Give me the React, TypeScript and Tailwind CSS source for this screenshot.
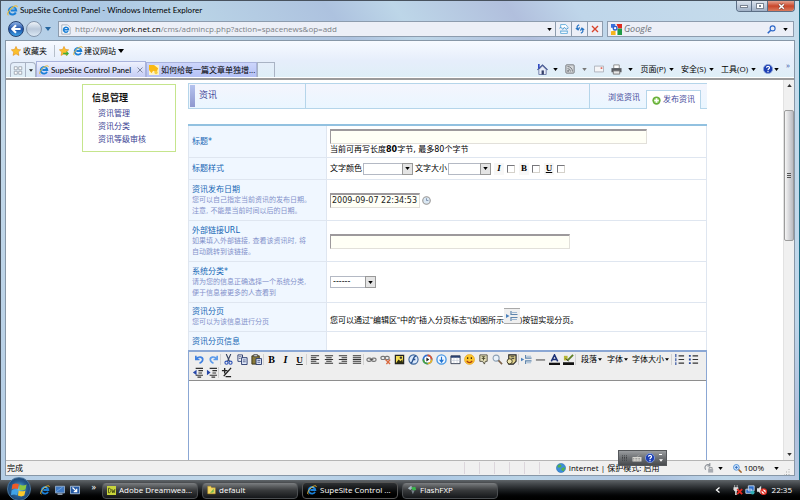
import { ReactNode } from 'react';

const uiFont = 'font-[Open_Sans,Noto_Sans_CJK_SC,sans-serif]';
const pageFont = 'font-[DejaVu_Sans,Noto_Sans_CJK_SC,sans-serif]';

interface GlyphProps {
  children: ReactNode;
  className?: string;
}

function Glyph({ children, className = 'w-3 h-3' }: GlyphProps) {
  return (
    <svg viewBox="0 0 12 12" className={`shrink-0 ${className}`} fill="none" aria-hidden="true">
      {children}
    </svg>
  );
}

function Caret({ className = 'text-black', size = 'w-[6px] h-1' }: { className?: string; size?: string }) {
  return (
    <svg viewBox="0 0 6 4" className={`shrink-0 ${size} ${className}`} aria-hidden="true">
      <path d="M0 0h6L3 4z" fill="currentColor" />
    </svg>
  );
}

function IeIcon({ className = 'w-[11px] h-[11px]' }: { className?: string }) {
  return (
    <Glyph className={className}>
      <path d="M9.6 8.2A4 4 0 1 1 10 6H4" stroke="#1b7fd6" strokeWidth="2.2" />
      <path d="M3.2 4.4A3.4 3.4 0 0 1 8.4 3.6" stroke="#6cc4f5" strokeWidth="1" />
      <path d="M1.6 11.2C-.6 10.2 2 5.6 5.6 2.8 8.6.5 11.6.2 11 2.4" stroke="#f0b92c" strokeWidth="1.1" />
    </Glyph>
  );
}

function Star({ add = false }: { add?: boolean }) {
  return (
    <Glyph className="w-[10px] h-[10px]">
      <path d="M6 .5l1.7 3.6 3.9.5-2.9 2.7.8 4L6 9.4l-3.5 1.9.8-4L.4 4.6l3.9-.5z" fill="#fbc02d" stroke="#e38a10" strokeWidth=".7" />
      {add && <path d="M5 8h4V6l3 3-3 3v-2H5z" fill="#3fae35" />}
    </Glyph>
  );
}

function TitleBar() {
  return (
    <header className="flex items-start h-[19px] pl-[6px] pr-1">
      <div className="flex items-center gap-[2px] h-[18px] flex-1">
        <IeIcon />
        <h1 className="text-[8px] leading-none text-black font-[Lato,sans-serif]">SupeSite Control Panel - Windows Internet Explorer</h1>
      </div>
      <div className="flex h-[11px] rounded-b border border-t-0 border-[#5c6f86] overflow-hidden">
        <button aria-label="Minimize" className="w-[15px] flex items-center justify-center bg-linear-to-b from-[#dbe3ed] to-[#9fb0c6] border-r border-[#5c6f86]">
          <span className="w-2 h-[3px] bg-white border border-[#7b8593]" />
        </button>
        <button aria-label="Maximize" className="w-4 flex items-center justify-center bg-linear-to-b from-[#dbe3ed] to-[#9fb0c6] border-r border-[#5c6f86]">
          <span className="w-2 h-[6px] bg-white border border-[#7b8593] flex items-center justify-center">
            <span className="w-[2px] h-[2px] bg-[#7b8593]" />
          </span>
        </button>
        <button aria-label="Close" className="w-[26px] flex items-center justify-center bg-linear-to-b from-[#e3a18f] via-[#c9462a] to-[#d9795c]">
          <Glyph className="w-[7px] h-[7px]">
            <path d="M2 2l8 8M10 2l-8 8" stroke="#6d3b33" strokeWidth="4.5" />
            <path d="M2 2l8 8M10 2l-8 8" stroke="#fff" strokeWidth="2.6" />
          </Glyph>
        </button>
      </div>
    </header>
  );
}

function AddressRow() {
  return (
    <div className="flex items-center h-[18px] pl-[7px] pr-[5px] mb-[2px]">
      <button aria-label="Back" className="w-4 h-4 rounded-full border border-[#24406f] bg-linear-to-b from-[#8fb3e6] via-[#1d4fa5] to-[#3fa4e8] flex items-center justify-center">
        <Glyph className="w-[10px] h-[10px]">
          <path d="M6 1.5L1.5 6 6 10.5M2 6h9.5" stroke="#fff" strokeWidth="2.6" />
        </Glyph>
      </button>
      <button aria-label="Forward" className="w-4 h-4 ml-[2px] rounded-full border border-[#8495ab] bg-linear-to-b from-[#eef3f9] via-[#b9c8da] to-[#dbe8f4]" />
      <button aria-label="Recent pages" className="ml-[3px] mr-[7px]">
        <Caret className="text-[#25659e]" />
      </button>
      <form className="flex flex-1 h-4 border border-[#8d9cae] bg-[#eceff7]">
        <label htmlFor="url" className="flex items-center pl-[2px] pr-1">
          <Glyph className="w-[10px] h-[11px]">
            <path d="M1 .5h7l3 3v8H1z" fill="#fff" stroke="#9aa5b3" />
            <path d="M8.5 8A3 3 0 1 1 9 6.2H4" stroke="#1b7fd6" strokeWidth="1.8" />
          </Glyph>
        </label>
        <div className="relative flex flex-1 items-center">
          <input id="url" aria-label="Address" className="w-full bg-transparent text-transparent text-[8px] outline-none" />
          <span className="absolute left-0 whitespace-nowrap text-[8px] leading-none text-[#7b7f86] font-[Open_Sans,sans-serif]">
            http://www.<b className="font-normal text-black">york.net.cn</b>/cms/admincp.php?action=spacenews&amp;op=add
          </span>
        </div>
        <button type="button" aria-label="Show addresses" className="w-[10px] flex items-center justify-center mr-[1px]"><Caret size="w-[5px] h-[3px]" /></button>
        <button type="button" aria-label="Compatibility view" className="w-4 flex items-center justify-center border-l border-[#8d9cae]">
          <Glyph className="w-[10px] h-[10px]">
            <path d="M2 4V.7h6l2 2V4M2 8v3.3h8V8" fill="#fff" stroke="#55a5d8" />
            <path d="M.5 5l2-1 2 2.5 2-2.5 2 2.5 3-2M2 8.5h8" stroke="#3a94d0" />
          </Glyph>
        </button>
        <button type="button" aria-label="Refresh" className="w-4 flex items-center justify-center border-l border-[#8d9cae]">
          <Glyph className="w-[10px] h-[10px]">
            <path d="M5 1C2 2 2 4 3.5 6.5M1 5l2.7 2L5.5 4M7 11c3-1 3-3 1.5-5.5M11 7L8.3 5 6.5 8" stroke="#2b76c4" strokeWidth="1.5" />
          </Glyph>
        </button>
        <button type="button" aria-label="Stop" className="w-[15px] flex items-center justify-center border-l border-[#8d9cae]">
          <Glyph className="w-2 h-2">
            <path d="M1.5 1.5l9 9M10.5 1.5l-9 9" stroke="#d8432b" strokeWidth="2" />
          </Glyph>
        </button>
      </form>
      <form className="flex items-center h-4 w-[187px] ml-1 px-[3px] border border-[#8d9cae] bg-[#eceff7]">
        <Glyph className="w-[11px] h-[11px]">
          <path d="M0 0h12v12H0z" fill="#fff" />
          <path d="M0 0h5L3 4H0z" fill="#3a6fdc" />
          <path d="M6 0h6v5H8z" fill="#de2b20" />
          <path d="M7 5h5v7H7z" fill="#1f9b47" />
          <path d="M0 8l5-1v5H0z" fill="#f6b51c" />
          <circle cx="4.5" cy="4.5" r="2" stroke="#2e62cf" strokeWidth="1.5" />
        </Glyph>
        <input aria-label="Search" placeholder="Google" className="flex-1 min-w-0 ml-[2px] bg-transparent text-[9px] italic placeholder:text-[#6d7178] outline-none font-[Open_Sans,sans-serif]" />
        <button type="button" aria-label="Search" className="mr-[7px]">
          <Glyph className="w-[9px] h-[9px]">
            <circle cx="7.5" cy="4.5" r="3.3" stroke="#2c66c8" strokeWidth="1.5" />
            <path d="M5 7l-4 4" stroke="#2c66c8" strokeWidth="2.2" />
          </Glyph>
        </button>
        <button type="button" aria-label="Search options" className="mr-[2px]"><Caret size="w-[5px] h-[3px]" /></button>
      </form>
    </div>
  );
}

function FavoritesBar() {
  return (
    <div className="flex items-center h-[19px] pl-[5px] text-[8px] leading-none text-black">
      <button className="flex items-center gap-[2px] pr-[7px] h-3 border-r border-[#b6bfca]"><Star />收藏夹</button>
      <button aria-label="Add to favorites" className="ml-[4px]"><Star add /></button>
      <button className="flex items-center gap-[1px] ml-[4px]">
        <IeIcon className="w-[10px] h-[10px]" />建议网站<Caret className="ml-[1px]" />
      </button>
    </div>
  );
}

function CommandBar() {
  return (
    <div className="flex items-center gap-[7px] h-4 text-[8px] leading-none text-black">
      <button aria-label="Home" className="flex items-center gap-[5px]">
        <Glyph className="w-[11px] h-[11px]">
          <path d="M2 6v5.5h8V6L6 2z" fill="#e8edf8" stroke="#6c7ba6" />
          <path d="M.5 6.5L6 1l5.5 5.5" stroke="#3d4f8c" strokeWidth="1.2" />
          <path d="M2 0v5" stroke="#2f49c4" strokeWidth="1.8" />
          <path d="M5 7h2.5v4.5H5z" fill="#34406a" />
        </Glyph>
        <Caret size="w-[5px] h-[3px]" />
      </button>
      <button aria-label="Feeds" className="flex items-center gap-[7px]">
        <Glyph className="w-[10px] h-[10px]">
          <rect x="1" y="1" width="10" height="10" rx="1" fill="#d5d8db" stroke="#676b70" />
          <path d="M3 5.5A3.5 3.5 0 0 1 6.5 9M3 3a6 6 0 0 1 6 6" stroke="#676b70" />
          <circle cx="3.7" cy="8.3" r="1" fill="#676b70" />
        </Glyph>
        <Caret className="text-[#777]" size="w-[5px] h-[3px]" />
      </button>
      <button aria-label="Read mail">
        <Glyph className="w-[10px] h-[10px]">
          <path d="M.5 2.5h11v7H.5z" fill="#f5f5f7" stroke="#a5a9b3" />
          <path d="M8 4h2v1.8H8z" fill="#dd5144" />
        </Glyph>
      </button>
      <button aria-label="Print" className="flex items-center gap-[6px]">
        <Glyph className="w-[11px] h-[11px]">
          <path d="M3 1h6v4H3z" fill="#fff" stroke="#8a8a8a" />
          <path d="M.5 4.5h11V9H.5z" fill="#5a5d63" />
          <path d="M2.500 7.500h7V11h-7z" fill="#e9e9e9" stroke="#777" />
        </Glyph>
        <Caret size="w-[5px] h-[3px]" />
      </button>
      <button className="flex items-center gap-[3px]">页面(P)<Caret size="w-[5px] h-[3px]" /></button>
      <button className="flex items-center gap-[3px]">安全(S)<Caret size="w-[5px] h-[3px]" /></button>
      <button className="flex items-center gap-[3px]">工具(O)<Caret size="w-[5px] h-[3px]" /></button>
      <button aria-label="Help" className="flex items-center gap-[1px]"><HelpIcon /><Caret size="w-[5px] h-[3px]" /></button>
      <span className="self-start text-[#3657a8] pr-1">»</span>
    </div>
  );
}

function HelpIcon() {
  return (
    <Glyph className="w-[10px] h-[10px]">
      <circle cx="6" cy="6" r="5.500" fill="#1c3fb4" stroke="#8da3d8" />
      <path d="M4.200 4.600C4.300 2.300 8 2.400 7.800 4.600 7.700 5.800 6 5.800 6 7.400M6 8.400V10" stroke="#fff" strokeWidth="1.400" />
    </Glyph>
  );
}

function TabRow() {
  return (
    <div className="flex items-end h-[17px] pl-1">
      <div className="flex h-[15px] border border-b-0 border-[#a9b3c4] rounded-t-sm">
        <button aria-label="Quick tabs" className="w-[15px] flex items-center justify-center border-r border-[#a9b3c4]">
          <Glyph className="w-[10px] h-[9px]">
            <path d="M1 1h4v4H1zM7 1h4v4H7zM1 7h4v4H1zM7 7h4v4H7z" stroke="#8d95a3" fill="#fff" />
          </Glyph>
        </button>
        <button aria-label="Tab list" className="w-[9px] flex items-center justify-center"><Caret className="text-[#222]" size="w-1 h-[3px]" /></button>
      </div>
      <div className="flex items-center h-4 w-[110px] px-[2px] gap-[2px] border border-b-0 border-[#a9b3dc] bg-linear-to-b from-[#eef1fd] to-[#c5cdf5] text-[8px] leading-none whitespace-nowrap">
        <IeIcon className="w-[10px] h-[10px]" />
        <a href="#" className="flex-1 font-[Lato,sans-serif]">SupeSite Control Panel</a>
        <button aria-label="Close tab">
          <Glyph className="w-[6px] h-[6px]"><path d="M1 1l10 10M11 1L1 11" stroke="#8088a0" strokeWidth="2" /></Glyph>
        </button>
      </div>
      <a href="#" className="flex items-center h-[15px] w-[111px] px-[2px] gap-[2px] border border-b-0 border-[#a9b3dc] bg-linear-to-b from-[#cdd6fb] to-[#b4c1f5] text-[8px] leading-none whitespace-nowrap">
        <Glyph className="w-[10px] h-[10px]">
          <path d="M0 0h12v12H0z" fill="#fdf3c8" />
          <path d="M0 0h6l5 4-2 5-4-2-2 3-3-4z" fill="#f9b915" />
          <circle cx="8.500" cy="9" r="2" fill="#f6cf45" />
        </Glyph>
        如何给每一篇文章单独增...
      </a>
      <button aria-label="New tab" className="w-[18px] h-[15px] border border-b-0 border-[#a9b3c4]" />
      <div className="flex-1" />
      <CommandBar />
    </div>
  );
}

function Sidebar() {
  return (
    <nav className="w-[94px] shrink-0 self-start mt-1 pt-[7px] pb-[5px] pl-[9px] border border-[#c5e58c]">
      <h2 className="text-[9px] leading-[13px] font-bold text-[#111]">信息管理</h2>
      <ul className="pl-[6px] mt-[2px] text-[8px] leading-[13px] text-[#3b3f94]">
        <li><a href="#">资讯管理</a></li>
        <li><a href="#">资讯分类</a></li>
        <li><a href="#">资讯等级审核</a></li>
      </ul>
    </nav>
  );
}

function PageTabs() {
  return (
    <div className="flex h-[26px] border border-r-0 border-[#b5d5ea] bg-linear-to-b from-[#f4f5fd] to-[#eaf6ff] text-[#45489a]">
      <div className="w-[5px] m-[1px] bg-linear-to-b from-[#b4c2ee] to-[#8f98cf]" />
      <h2 className="w-[110px] pl-[3px] text-[9px] leading-[22px] border-r border-[#b5d5ea]">资讯</h2>
      <div className="flex flex-1 items-end justify-end text-[8px]">
        <a href="#" className="h-full flex items-center pt-1 pl-[18px] pr-[6px] border-l border-[#b5d5ea]">浏览资讯</a>
        <a href="#" className="flex items-center gap-[2px] h-[19px] -mb-px mr-[6px] px-[5px] bg-white border border-b-0 border-[#b5d5ea]">
          <Glyph className="w-[9px] h-[9px]">
            <circle cx="6" cy="6" r="5.500" fill="#68b03a" />
            <circle cx="6" cy="6" r="3.400" fill="#9ed674" />
            <path d="M6 3v6M3 6h6" stroke="#fff" strokeWidth="2" />
          </Glyph>
          发布资讯
        </a>
      </div>
    </div>
  );
}

interface FieldRowProps {
  id: string;
  label: string;
  required?: boolean;
  hint?: string[];
  className: string;
  children?: ReactNode;
}

function FieldRow({ id, label, required, hint = [], className, children }: FieldRowProps) {
  return (
    <div className={`flex border-b border-[#dfe6f0] ${className}`}>
      <div className="w-[138px] shrink-0 pl-[3px] flex flex-col justify-center bg-[#f0f7ff] border-r border-[#dfe6f0] whitespace-nowrap">
        <label htmlFor={id} className="text-[8px] leading-[11px] text-[#1566b4]">
          {label}{required && '*'}
        </label>
        {hint.map(line => (
          <p key={line} className="text-[7px] leading-[11px] text-[#8492cb]">{line}</p>
        ))}
      </div>
      <div className="flex-1 pl-[3px] flex flex-col justify-center items-start text-[8px] leading-[11px] text-black whitespace-nowrap">
        {children}
      </div>
    </div>
  );
}

const inputLook = 'h-[15px] px-[1px] bg-[#fffff6] border border-[#e2e0da] border-t-2 border-t-[#9d999c] border-l-[#9d999c] outline-none';

interface PickProps {
  id: string;
  label: string;
  text?: string;
  className: string;
}

function Pick({ id, label, text = '', className }: PickProps) {
  return (
    <span className={`relative inline-flex h-3 ${className}`}>
      <select id={id} aria-label={label} className="w-full h-3 pl-[2px] appearance-none bg-white border border-[#b4b9c4] text-[8px] leading-none outline-none">
        <option>{text}</option>
      </select>
      <span className="absolute right-0 top-0 w-[11px] h-3 flex items-center justify-center bg-[#e4e4e4] border border-[#999] pointer-events-none">
        <Caret size="w-[5px] h-[3px]" />
      </span>
    </span>
  );
}

function StyleCheck({ letter, label, className }: { letter: string; label: string; className: string }) {
  return (
    <label className="flex items-center gap-[3px]">
      <span className={`w-[10px] h-3 text-center text-[9px] leading-[10px] font-bold bg-[#f7f7f7] font-[Liberation_Serif,serif] ${className}`}>{letter}</span>
      <input type="checkbox" aria-label={label} className="appearance-none w-2 h-2 bg-white border border-[#d5d2cb] border-t-[#77777c] border-l-[#77777c]" />
    </label>
  );
}

const lines = (d: string) => <path d={d} stroke="#333" strokeWidth="1.100" />;

function PageBreakGlyph() {
  return (
    <>
      <path d="M5 1v3.500h6.500M5 11V7.500h6.500" stroke="#5e85ad" strokeWidth="1.200" />
      <path d="M6 2.500h5M6 9.500h5" stroke="#9fb9d3" strokeWidth="1.200" />
      <path d="M0 4l3.500 2L0 8z" fill="#4a80bd" />
    </>
  );
}

const toolGroups: { name: string; art: ReactNode }[][] = [
  [
    { name: 'Undo', art: <path d="M2 2v4h4M2.500 5.500C5 2 10 3 9.500 6.500 9.200 8.500 7.500 9.500 6 10" stroke="#3d7fe0" strokeWidth="1.800" /> },
    { name: 'Redo', art: <path d="M10 2v4H6M9.500 5.500C7 2 2 3 2.500 6.500 2.800 8.500 4.500 9.500 6 10" stroke="#5b9aea" strokeWidth="1.800" /> },
  ],
  [
    { name: 'Cut', art: <><path d="M3.500 0L7 8M8.500 0L5 8" stroke="#34405c" strokeWidth="1.200" /><circle cx="3.800" cy="9.500" r="1.700" stroke="#2d52b6" strokeWidth="1.200" /><circle cx="8.200" cy="9.500" r="1.700" stroke="#2d52b6" strokeWidth="1.200" /></> },
    { name: 'Copy', art: <><path d="M1 1h5v7H1z" fill="#fff" stroke="#26386b" /><path d="M5 4h6v7.500H5z" fill="#e4ebfa" stroke="#26386b" /><path d="M6.500 6.500h3M6.500 8.500h3M2 3h3M2 5h2" stroke="#26386b" strokeWidth=".8" /></> },
    { name: 'Paste', art: <><path d="M1 2h8v9H1z" fill="#8a7a3a" stroke="#373014" /><path d="M3 .5h4v2.500H3z" fill="#c7c7c7" stroke="#333" strokeWidth=".7" /><path d="M5.500 5h6v6.500h-6z" fill="#dfe7fa" stroke="#26386b" /><path d="M7 7h3M7 9h3" stroke="#26386b" strokeWidth=".8" /></> },
  ],
  [
    { name: 'Bold', art: <text x="6" y="10" textAnchor="middle" className="text-[11px] font-bold font-[Liberation_Serif,serif]" fill="#000">B</text> },
    { name: 'Italic', art: <text x="6" y="10" textAnchor="middle" className="text-[11px] font-bold italic font-[Liberation_Serif,serif]" fill="#000">I</text> },
    { name: 'Underline', art: <text x="6" y="10" textAnchor="middle" className="text-[10px] font-bold underline font-[Liberation_Serif,serif]" fill="#000">U</text> },
  ],
  [
    { name: 'Align left', art: lines('M2 2h9M2 4h6M2 6h9M2 8h6M2 10h9') },
    { name: 'Align center', art: lines('M2 2h9M3.500 4h6M2 6h9M3.500 8h6M2 10h9') },
    { name: 'Align right', art: lines('M2 2h9M5 4h6M2 6h9M5 8h6M2 10h9') },
    { name: 'Justify', art: lines('M2 2h9M2 4h9M2 6h9M2 8h9M2 10h9') },
  ],
  [
    { name: 'Link', art: <><rect x="1" y="4.500" width="5" height="3.500" rx="1.700" stroke="#777" strokeWidth="1.300" /><rect x="6" y="4.500" width="5" height="3.500" rx="1.700" stroke="#777" strokeWidth="1.300" /><path d="M4 6.200h4" stroke="#444" /></> },
    { name: 'Unlink', art: <><rect x="1" y="2.500" width="4.500" height="3.500" rx="1.700" stroke="#777" strokeWidth="1.300" /><rect x="5.500" y="2.500" width="4.500" height="3.500" rx="1.700" stroke="#777" strokeWidth="1.300" /><path d="M6 6l5 5M11 6L7 11" stroke="#d8683e" strokeWidth="1.500" /></> },
    { name: 'Image', art: <><path d="M1.500 1.500h9v9h-9z" fill="#f4dc53" stroke="#222" strokeWidth="1.300" /><path d="M2 10l3-4 2 2 2-2 1 4z" fill="#30300f" /><circle cx="7.500" cy="4" r="1.300" fill="#333" /></> },
    { name: 'Flash', art: <><circle cx="6" cy="6" r="5" fill="#dbe9fb" stroke="#3b659d" strokeWidth="1.200" /><path d="M9 2C5 2 6 9.500 3 10M5 6h3" stroke="#28518e" strokeWidth="1.500" /></> },
    { name: 'Media', art: <><circle cx="6" cy="6" r="4.500" fill="#fff" stroke="#2f6fd0" strokeWidth="2" /><path d="M6 1.500A4.500 4.500 0 0 1 10.500 6" stroke="#e3542b" strokeWidth="2" /><path d="M10.500 6A4.500 4.500 0 0 1 6 10.500" stroke="#f1b61f" strokeWidth="2" /><path d="M6 10.500A4.500 4.500 0 0 1 1.500 6" stroke="#48a53a" strokeWidth="2" /><path d="M4.800 3.800L8 6 4.800 8.200z" fill="#222" /></> },
    { name: 'Real', art: <><circle cx="6" cy="6" r="5" fill="#eef6ff" stroke="#4796e3" strokeWidth="1.500" /><path d="M6 3v4.500M6 9L4.500 7h3z" stroke="#2174d1" strokeWidth="1.200" /></> },
    { name: 'Table', art: <><path d="M1 2h10v8.500H1z" fill="#fff" stroke="#333d52" /><path d="M1 3h10" stroke="#29406f" strokeWidth="2.200" /><path d="M4.300 4v6M7.700 4v6M1 7h10" stroke="#c4cbd8" strokeWidth=".7" /></> },
    { name: 'Smiley', art: <><circle cx="6" cy="6" r="5.500" fill="#fbc62d" stroke="#e59a18" strokeWidth=".6" /><path d="M4 3.500v2M8 3.500v2" stroke="#3d2a08" strokeWidth="1.300" /><path d="M3 7.500c1.500 2.500 4.500 2.500 6 0" stroke="#a93a14" strokeWidth="1.200" /></> },
    { name: 'Quote', art: <><path d="M2 1h8v7H8l-1 3-2-3H2z" fill="#e9e4bd" stroke="#4f4c3c" /><path d="M4 3h4M4 5h4M6 3v4" stroke="#4b492d" /></> },
    { name: 'Preview', art: <><circle cx="4.500" cy="4.500" r="3.300" fill="#e9f2fa" stroke="#8ca0b4" strokeWidth="1.200" /><path d="M7 7l4 4" stroke="#7e654c" strokeWidth="1.800" /></> },
    { name: 'Attachment', art: <><path d="M3 1h8v7L8 11H3z" fill="#e0d28b" stroke="#222" strokeWidth="1.200" /><circle cx="4" cy="8" r="2.800" fill="#efe6b0" stroke="#3b361c" /><path d="M5 3h4M6 5h3" stroke="#333" /></> },
  ],
  [
    { name: 'Page break', art: <PageBreakGlyph /> },
    { name: 'Rule', art: <path d="M1 6.500h10" stroke="#333" /> },
    { name: 'Font color', art: <><path d="M2.500 8L6 1l3.500 7M4 6h4" stroke="#1c3175" strokeWidth="1.700" /><path d="M0 9.500h12V12H0z" fill="#111" /></> },
    { name: 'Highlight', art: <><path d="M0 9h12v3H0z" fill="#111" /><path d="M1 2h4v5H1z" fill="#b5b533" /><path d="M5 7l6-6" stroke="#5d7f27" strokeWidth="2" /><path d="M3 5l3 3" stroke="#333" /></> },
  ],
];

const listTools = [
  { name: 'Numbered list', art: <><path d="M5 2h6M5 6h6M5 10h6" stroke="#333" strokeWidth="1.200" /><path d="M2 0v3.500M2 4.500V8M2 9v3" stroke="#284a9d" strokeWidth="1.200" /></> },
  { name: 'Bulleted list', art: <><path d="M5 2h6M5 6h6M5 10h6" stroke="#333" strokeWidth="1.200" /><path d="M1 1h2v2H1zM1 5h2v2H1zM1 9h2v2H1z" fill="#284a9d" /></> },
];

const indentArt = 'M4 1.500h8M7 4h5M7 6.500h4M4 9h8M6 11h4';

const indentTools = [
  { name: 'Outdent', art: <><path d={indentArt} stroke="#333" strokeWidth="1.200" /><path d="M5 3v6L1 6z" fill="#2546a8" /></> },
  { name: 'Indent', art: <><path d={indentArt} stroke="#333" strokeWidth="1.200" /><path d="M1 3v6l4-3z" fill="#2546a8" /></> },
];

function Tool({ name, art }: { name: string; art: ReactNode }) {
  return (
    <button aria-label={name} className="w-[14px] h-[13px] flex items-center justify-center">
      <Glyph className="w-[11px] h-[11px]">{art}</Glyph>
    </button>
  );
}

function Divider() {
  return <span className="w-px h-[11px] bg-[#d2d2d2]" />;
}

function Editor() {
  return (
    <section className="flex-1 flex flex-col border border-t-2 border-b-0 border-[#8ba7d4] bg-white">
      <div className="pt-[1px] pb-[1px] bg-[#eeeeee] border-b border-[#8e8e8e] text-[8px] leading-none whitespace-nowrap">
        <div className="flex items-center pl-[3px]">
          {toolGroups.map(group => (
            <div key={group[0].name} className="flex items-center">
              {group.map(tool => <Tool key={tool.name} {...tool} />)}
              <Divider />
            </div>
          ))}
          <button className="flex items-center gap-[1px] ml-[5px]">段落<Caret size="w-1 h-[3px]" /></button>
          <button className="flex items-center gap-[1px] ml-[5px]">字体<Caret size="w-1 h-[3px]" /></button>
          <button className="flex items-center gap-[1px] ml-1 mr-[2px]">字体大小<Caret size="w-1 h-[3px]" /></button>
          <Divider />
          {listTools.map(tool => <Tool key={tool.name} {...tool} />)}
        </div>
        <div className="flex items-center pl-[1px]">
          {indentTools.map(tool => <Tool key={tool.name} {...tool} />)}
          <Divider />
          <Tool name="Resize" art={<path d="M1 4h6M4 1v6M11 1L3 10M5 10.500h6" stroke="#222" strokeWidth="1.500" />} />
        </div>
      </div>
      <textarea aria-label="资讯内容" className="flex-1 w-full min-h-0 resize-none outline-none" />
    </section>
  );
}

function NewsForm() {
  return (
    <div className="mt-[15px] border-t-2 border-[#92c1e0]">
      <div className="border-x border-[#dfe6f0]">
        <FieldRow id="title" label="标题" required className="h-8">
          <input id="title" className={`w-[317px] ${inputLook}`} />
          <p>当前可再写长度<b>80</b>字节, 最多80个字节</p>
        </FieldRow>
        <FieldRow id="color" label="标题样式" className="h-[22px]">
          <div className="flex items-center gap-[1px]">
            <span>文字颜色</span>
            <Pick id="color" label="文字颜色" className="w-[50px]" />
            <span className="ml-[1px]">文字大小</span>
            <Pick id="size" label="文字大小" className="w-[43px]" />
            <div className="flex gap-[4px] ml-[2px]">
              <StyleCheck letter="I" label="斜体" className="italic" />
              <StyleCheck letter="B" label="粗体" className="" />
              <StyleCheck letter="U" label="下划线" className="underline" />
            </div>
          </div>
        </FieldRow>
        <FieldRow id="date" label="资讯发布日期" hint={['您可以自己指定当前资讯的发布日期。', '注意, 不能是当前时间以后的日期。']} className="h-[41px]">
          <div className="flex items-center gap-[2px]">
            <input id="date" defaultValue="2009-09-07 22:34:53" className={`w-[90px] text-[8px] text-[#222] ${inputLook}`} />
            <button aria-label="Pick a date">
              <Glyph className="w-[9px] h-[9px]">
                <circle cx="6" cy="6" r="5" fill="#dbe8f3" stroke="#9a9896" strokeWidth="1.500" />
                <path d="M6 3v3h2.500" stroke="#6a7fa0" />
              </Glyph>
            </button>
          </div>
        </FieldRow>
        <FieldRow id="link" label="外部链接URL" hint={['如果填入外部链接, 查看该资讯时, 将', '自动跳转到该链接。']} className="h-[41px]">
          <input id="link" className={`w-[240px] ${inputLook}`} />
        </FieldRow>
        <FieldRow id="category" label="系统分类" required hint={['请为您的信息正确选择一个系统分类,', '便于信息被更多的人查看到']} className="h-[41px]">
          <Pick id="category" label="系统分类" text="------" className="w-[46px]" />
        </FieldRow>
        <FieldRow id="editor-note" label="资讯分页" hint={['您可以为该信息进行分页']} className="h-[29px]">
          <p id="editor-note" className="flex items-end font-[Lato,Noto_Sans_CJK_SC,sans-serif]">
            您可以通过"编辑区"中的"插入分页标志"(如图所示
            <span className="w-4 h-4 mb-[2px] flex items-center justify-center bg-[#efefef] border-y border-[#a9a9a9]">
              <Glyph className="w-3 h-3"><PageBreakGlyph /></Glyph>
            </span>
            )按钮实现分页。
          </p>
        </FieldRow>
        <FieldRow id="page-info" label="资讯分页信息" className="h-[18px] border-b-0" />
      </div>
    </div>
  );
}

function ScrollBar() {
  return (
    <div className="w-[11px] shrink-0 flex flex-col items-center bg-[#f0f0f0] border-l border-[#e2e2e2]">
      <button aria-label="Scroll up" className="h-3 flex items-center justify-center rotate-180"><Caret className="text-[#333]" size="w-[5px] h-[3px]" /></button>
      <div className="w-full h-[18px]" />
      <div className="w-full h-[131px] flex flex-col items-center justify-center gap-[1px] border border-[#9c9c9c] rounded-[2px] bg-linear-to-r from-[#f5f5f5] to-[#b9bac0]">
        <span className="w-1 h-px bg-[#555]" />
        <span className="w-1 h-px bg-[#555]" />
        <span className="w-1 h-px bg-[#555]" />
      </div>
      <div className="flex-1" />
      <button aria-label="Scroll down" className="h-3 flex items-center justify-center"><Caret className="text-[#333]" size="w-[5px] h-[3px]" /></button>
    </div>
  );
}

function StatusBar() {
  return (
    <footer className="flex items-center h-[15px] pl-[1px] pr-1 bg-[#f0f0f0] border-t border-[#b5b5b5] text-[8px] leading-none text-black">
      <span className="flex-1">完成</span>
      <div className="flex self-stretch my-[1px]">
        <span className="w-[15px] border-l border-[#dcd6dc]" />
        <span className="w-[15px] border-l border-[#dcd6dc]" />
        <span className="w-[15px] border-l border-[#dcd6dc]" />
        <span className="w-[15px] border-l border-[#dcd6dc]" />
        <span className="w-[15px] border-l border-[#dcd6dc]" />
        <span className="w-[17px] border-l border-[#dcd6dc]" />
      </div>
      <div className="flex items-center gap-[3px] w-36 whitespace-nowrap">
        <Glyph className="w-[10px] h-[10px]">
          <circle cx="6" cy="6" r="5.500" fill="#3c8edb" stroke="#2869ab" strokeWidth=".6" />
          <path d="M2 3l3-1.500 2 2-2 2-3 0zM6 7l3-2 2 1-2 4-2-1z" fill="#54b347" />
        </Glyph>
        Internet | 保护模式: 启用
      </div>
      <button aria-label="Privacy" className="flex items-center gap-1 px-1">
        <Glyph className="w-[10px] h-[10px]">
          <path d="M2 8C-.5 4 4 0 7 3M7 0v3.500H4" stroke="#8a8f96" strokeWidth="1.300" />
          <path d="M5 7h6v4.500H5z" fill="#a7abb1" />
          <path d="M6.200 7V5.500h3.600V7" stroke="#84888e" />
        </Glyph>
        <Caret size="w-[5px] h-[3px]" />
      </button>
      <button className="flex items-center gap-[2px] ml-[6px]">
        <Glyph className="w-[9px] h-[9px]">
          <circle cx="4.500" cy="4.500" r="3.800" fill="#d8eaff" stroke="#4f91d8" strokeWidth="1.300" />
          <path d="M4.500 2.500v4M2.500 4.500h4" stroke="#2b69bb" strokeWidth="1.200" />
          <path d="M7.500 7.500l4 4" stroke="#a0652e" strokeWidth="2" />
        </Glyph>
        100%
        <Caret className="ml-2" size="w-[5px] h-[3px]" />
      </button>
      <Glyph className="w-[6px] h-[6px] self-end ml-[5px]">
        <path d="M10 0v2M10 5v2M10 10v2M5 5v2M5 10v2M0 10v2" stroke="#aaa" strokeWidth="2" />
      </Glyph>
    </footer>
  );
}

function LanguageBar() {
  return (
    <div className="absolute right-[133px] bottom-[34px] w-[49px] h-4 px-[3px] flex items-center justify-between bg-linear-to-b from-[#9a9da0] via-[#6d7073] to-[#484b4e] border border-[#55585b]">
      <Glyph className="w-[6px] h-[10px]">
        <path d="M1 1v10M5 1v10M9 1v10" stroke="#303235" strokeWidth="2" strokeDasharray="1.500 1.500" />
      </Glyph>
      <Glyph className="w-[10px] h-[9px]">
        <path d="M0 4h12v6H0z" fill="#d5d5d0" />
        <path d="M1 6h10M1 8h10" stroke="#777" strokeDasharray="1 1" />
        <path d="M6 4c0-2 3-1 3-3" stroke="#aaa" />
      </Glyph>
      <HelpIcon />
      <span className="flex flex-col items-center gap-1">
        <span className="w-[3px] h-px bg-white" />
        <Caret className="text-white" size="w-1 h-[3px]" />
      </span>
    </div>
  );
}

interface TaskProps {
  icon: ReactNode;
  title: string;
  active?: boolean;
}

function Task({ icon, title, active }: TaskProps) {
  return (
    <button
      className={`flex items-center gap-[3px] w-24 h-[17px] px-1 rounded-sm border text-[8px] text-white whitespace-nowrap ${
        active
          ? 'border-[#555] bg-linear-to-b from-[#2f3235] to-black'
          : 'border-[#4b4e51] bg-linear-to-b from-[#7c7f82] via-[#37393b] to-[#15171a]'
      }`}
    >
      {icon}
      {title}
    </button>
  );
}

function Taskbar() {
  return (
    <nav className="relative flex items-center h-5 pr-2 bg-linear-to-b from-[#5f6468] via-[#1c1f22] to-black text-white">
      <button aria-label="Start" className="absolute left-[7px] -top-[3px] w-6 h-6 rounded-full border border-[#4a78a0] bg-radial from-[#69c7ee] via-[#245a8f] to-[#142c50] flex items-center justify-center">
        <Glyph className="w-[17px] h-[17px]">
          <path d="M1 2.500c1.500-1 3-1 4.500-.3L5 5.700c-1.500-.7-3-.7-4.500.3z" fill="#ee5a26" />
          <path d="M6.200 2.500c1.500.8 3 .8 4.800 0l-.8 3.500c-1.500.8-3 .7-4.500 0z" fill="#8bc740" />
          <path d="M.4 6.700c1.500-1 3-1 4.500-.3L4.300 10C3 9.300 1.500 9.300 0 10z" fill="#41a3e8" />
          <path d="M5.500 6.700c1.500.8 3 .8 4.700 0L9.400 10.300c-1.500.8-3 .7-4.500 0z" fill="#fcc92c" />
        </Glyph>
      </button>
      <div className="flex items-center gap-[5px] pl-10">
        <IeIcon className="w-[10px] h-[10px]" />
        <Glyph className="w-[10px] h-[10px]">
          <path d="M.5 1.500h11v8H.5z" fill="#3f78c2" stroke="#9fb7d3" />
          <path d="M3 11h6" stroke="#b5c6da" strokeWidth="1.500" />
          <path d="M1.500 8L9 2.500" stroke="#77abe6" />
        </Glyph>
        <Glyph className="w-[10px] h-[10px]">
          <path d="M.5 1.500h11v9H.5z" fill="#2459a5" stroke="#b5cbe5" />
          <path d="M3 3l5 5M8 4.500V8H4.500" stroke="#fff" strokeWidth="1.500" />
        </Glyph>
      </div>
      <span className="w-[22px] text-right pr-[6px] text-[9px] leading-none self-start pt-[2px]">»</span>
      <div className="flex flex-1 gap-1 font-[Open_Sans,sans-serif]">
        <Task
          title="Adobe Dreamwea..."
          icon={
            <Glyph className="w-[9px] h-[9px]">
              <path d="M0 0h12v12H0z" fill="#c8d43c" />
              <path d="M2 3v6h1c3 0 3-6 0-6zM6.500 4l1 5 1-3 1 3 1-5" stroke="#33380c" />
            </Glyph>
          }
        />
        <Task
          title="default"
          icon={
            <Glyph className="w-[9px] h-[10px]">
              <path d="M1 1h4l1 2h5v8H1z" fill="#f4d763" stroke="#c39a2b" strokeWidth=".7" />
              <path d="M4 10l5-6v5z" fill="#6fb94d" />
            </Glyph>
          }
        />
        <Task active title="SupeSite Control ..." icon={<IeIcon className="w-[10px] h-[10px]" />} />
        <Task
          title="FlashFXP"
          icon={
            <Glyph className="w-[10px] h-[10px]">
              <path d="M1 4l4-3 2 3-3 2z" fill="#a7b7c1" />
              <path d="M5 3l5-1 1 4-4 1z" fill="#39b54a" />
              <path d="M5 6l2 5 2-4z" fill="#76828a" />
            </Glyph>
          }
        />
      </div>
      <div className="flex items-center gap-[2px] text-[8px] font-[Open_Sans,sans-serif]">
        <Glyph className="w-[6px] h-2 mr-[10px]"><path d="M9 1L3 6l6 5" stroke="#fff" strokeWidth="2.500" /></Glyph>
        <Glyph className="w-[10px] h-[10px]">
          <path d="M2 0v3M5 0v3M1 3h5v3L4 8v4H3V8L1 6z" fill="#ddd" stroke="#ddd" strokeWidth=".8" />
          <path d="M5 5l6 6M11 5l-6 6" stroke="#e7281f" strokeWidth="2.200" />
        </Glyph>
        <Glyph className="w-[10px] h-[10px]">
          <path d="M4 1h7v6H4zM1 5h7v5H1z" fill="#2e6fcb" stroke="#d3e1f1" />
          <circle cx="9" cy="9" r="2.500" fill="#35b0b8" />
        </Glyph>
        <Glyph className="w-[10px] h-[10px]">
          <path d="M0 4h2l3-3v10L2 8H0z" fill="#e3e3e3" />
          <circle cx="8" cy="8" r="3.300" fill="#fff" stroke="#e02c20" strokeWidth="1.500" />
          <path d="M6 6l4 4" stroke="#e02c20" strokeWidth="1.500" />
        </Glyph>
        <time className="ml-[3px]">22:35</time>
      </div>
    </nav>
  );
}

export default function App() {
  return (
    <div className={`relative h-screen flex flex-col overflow-hidden bg-[#176a82] ${uiFont}`}>
      <div className="flex-1 min-h-0 flex flex-col border-t border-l border-[#48525e] bg-[linear-gradient(55deg,#b4cde5_0%,#c3d9ea_22%,#acc8e4_38%,#b9d3e6_46%,#adc2df_58%,#bdd6e8_64%,#b1bfdd_74%,#bfd6ea_80%,#c7ddec_100%)] mr-px">
        <TitleBar />
        <AddressRow />
        <div className="flex-1 min-h-0 flex flex-col ml-1 mr-1 mb-1 border border-[#8797a7]">
          <div className="bg-linear-to-b from-[#f7faff] via-[#e6eefb] to-[#ddeff6]">
            <FavoritesBar />
            <TabRow />
            <div className="h-[3px] bg-white border-b-2 border-[#9b9b9b]" />
          </div>
          <main className={`flex-1 min-h-0 flex bg-white ${pageFont}`}>
            <div className="flex-1 min-w-0 flex gap-3 px-[76px]">
              <Sidebar />
              <div className="flex-1 min-w-0 flex flex-col pt-[3px]">
                <PageTabs />
                <NewsForm />
                <Editor />
              </div>
            </div>
            <ScrollBar />
          </main>
          <StatusBar />
        </div>
      </div>
      <Taskbar />
      <LanguageBar />
    </div>
  );
}
